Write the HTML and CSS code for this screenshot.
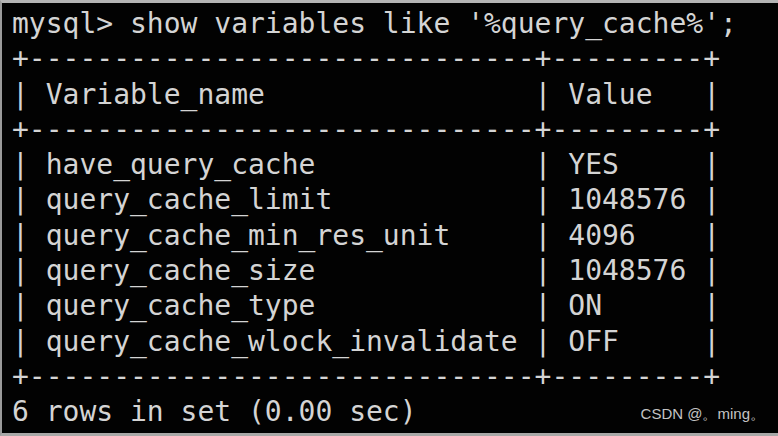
FILE: index.html
```html
<!DOCTYPE html>
<html lang="en">
<head>
<meta charset="utf-8">
<title>mysql query_cache</title>
<link rel="stylesheet" href="styles.css">
</head>
<body>
<div class="screen">
<div class="console">
<div class="line">mysql&gt; show variables like '%query_cache%';</div>
<div class="line">+------------------------------+---------+</div>
<div class="line">| Variable_name                | Value   |</div>
<div class="line">+------------------------------+---------+</div>
<div class="line">| have_query_cache             | YES     |</div>
<div class="line">| query_cache_limit            | 1048576 |</div>
<div class="line">| query_cache_min_res_unit     | 4096    |</div>
<div class="line">| query_cache_size             | 1048576 |</div>
<div class="line">| query_cache_type             | ON      |</div>
<div class="line">| query_cache_wlock_invalidate | OFF     |</div>
<div class="line">+------------------------------+---------+</div>
<div class="line">6 rows in set (0.00 sec)</div>
</div>
<div class="watermark">CSDN @。ming。</div>
</div>
</body>
</html>
```

FILE: styles.css
```css
html, body {
  margin: 0;
  padding: 0;
  background: #000;
}

.screen {
  position: relative;
  width: 778px;
  height: 436px;
  box-sizing: border-box;
  background: #020202;
  border-top: 3px solid #b4b4b4;
  border-left: 2px solid #9a9a9a;
  border-bottom: 3px solid #a8a8a8;
  overflow: hidden;
}

.console {
  display: flex;
  flex-direction: column;
  align-items: flex-start;
  padding: 3px 0 0 10px;
  font-family: "DejaVu Sans Mono", "Liberation Mono", monospace;
  font-size: 28px;
  line-height: 35.3px;
  color: #d4d4d4;
}

.line {
  white-space: pre;
}

.watermark {
  position: absolute;
  right: 13px;
  bottom: 9px;
  font-family: "Liberation Sans", Arial, sans-serif;
  font-size: 15px;
  color: #c4c4c4;
}
```
